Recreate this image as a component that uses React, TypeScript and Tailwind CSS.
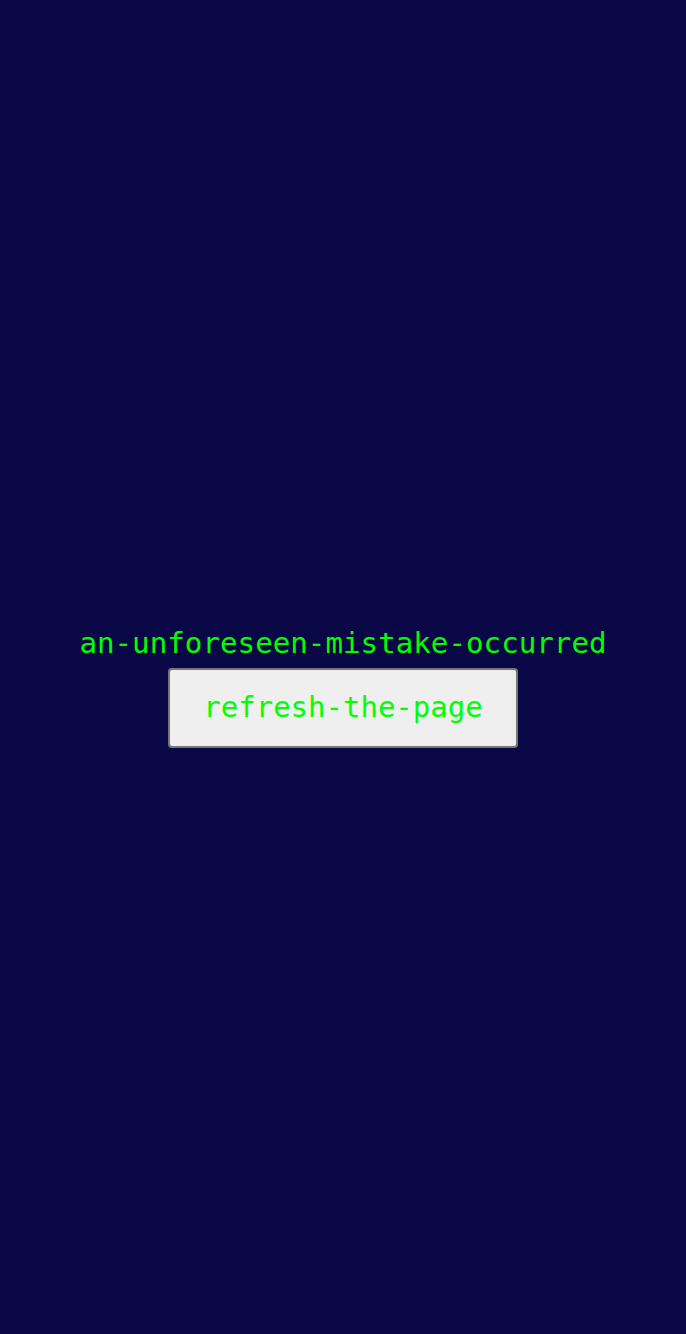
export default function App() {
  return (
    <div className="min-h-screen bg-[#0a0747] flex flex-col items-center justify-center pt-[40px] font-['DejaVu_Sans_Mono',monospace] text-[#00ff00]">
      <div className="text-[29.2px] leading-[34px]">an-unforeseen-mistake-occurred</div>
      <button className="mt-[8px] w-[350px] h-[80px] bg-[#efefef] border-2 border-[#767676] rounded-[4px] text-[29px] text-[#00ff00]">
        refresh-the-page
      </button>
    </div>
  );
}
